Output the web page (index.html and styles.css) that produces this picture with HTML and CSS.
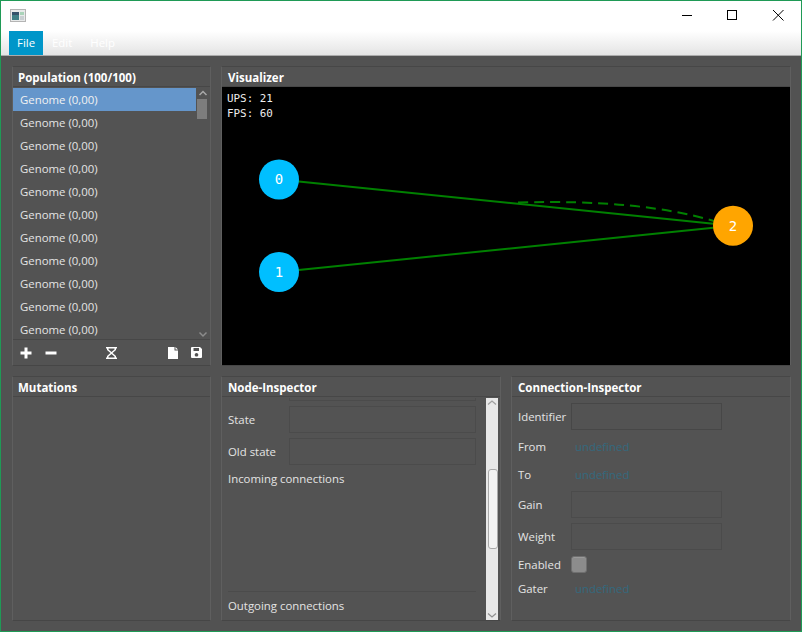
FILE: index.html
```html
<!DOCTYPE html>
<html lang="en">
<head>
<meta charset="utf-8">
<title>Population</title>
<link rel="stylesheet" href="styles.css">
</head>
<body>
<div class="window">
  <header class="titlebar">
    <svg class="appicon" width="16" height="13" viewBox="0 0 16 13">
      <rect x="0.5" y="0.5" width="15" height="12" fill="#e8eaea" stroke="#b4b4b4"/>
      <rect x="2" y="3" width="7" height="8" fill="#3f7f86"/>
      <rect x="2" y="3" width="7" height="3" fill="#35536b"/>
      <rect x="10" y="3" width="4" height="3" fill="#a9d3b9"/>
      <rect x="10" y="7" width="4" height="4" fill="#c9cfd2"/>
    </svg>
    <div class="winbtns">
      <svg class="winbtn" width="46" height="30" viewBox="0 0 46 30"><path d="M19 14.500H29" stroke="#000" fill="none"/></svg>
      <svg class="winbtn" width="46" height="30" viewBox="0 0 46 30"><rect x="18.500" y="9.500" width="9" height="9" stroke="#000" fill="none"/></svg>
      <svg class="winbtn" width="46" height="30" viewBox="0 0 46 30"><path d="M18 9L28.500 19.500M28.500 9L18 19.500" stroke="#000" fill="none"/></svg>
    </div>
  </header>
  <nav class="menubar">
    <span class="menu active">File</span>
    <span class="menu">Edit</span>
    <span class="menu">Help</span>
  </nav>
  <main class="content">
    <section class="panel population">
      <h2 class="ptitle">Population (100/100)</h2>
      <div class="listwrap">
        <ul class="list">
          <li class="row selected">Genome (0,00)</li>
          <li class="row">Genome (0,00)</li>
          <li class="row">Genome (0,00)</li>
          <li class="row">Genome (0,00)</li>
          <li class="row">Genome (0,00)</li>
          <li class="row">Genome (0,00)</li>
          <li class="row">Genome (0,00)</li>
          <li class="row">Genome (0,00)</li>
          <li class="row">Genome (0,00)</li>
          <li class="row">Genome (0,00)</li>
          <li class="row">Genome (0,00)</li>
        </ul>
        <div class="lscroll">
          <svg class="arrow" width="14" height="10" viewBox="0 0 14 10"><path d="M3.500 7L7 3.500L10.500 7" fill="none" stroke="#a8a8a8" stroke-width="1.500"/></svg>
          <div class="lthumb"></div>
          <svg class="arrow bottom" width="14" height="10" viewBox="0 0 14 10"><path d="M3.500 3.500L7 7L10.500 3.500" fill="none" stroke="#8c8c8c" stroke-width="1.500"/></svg>
        </div>
      </div>
      <div class="toolbar">
        <svg width="12" height="12" viewBox="0 0 12 12" class="tool plus"><path d="M0.500 6H11.500M6 0.500V11.500" stroke="#fff" stroke-width="3" fill="none"/></svg>
        <svg width="12" height="12" viewBox="0 0 12 12" class="tool minus"><path d="M0.500 6H11.500" stroke="#fff" stroke-width="3" fill="none"/></svg>
        <svg width="11" height="12" viewBox="0 0 11 12" class="tool glass"><path d="M0 0H11V1.500H10V3L6.500 6L10 9V10.500H11V12H0V10.500H1V9L4.500 6L1 3V1.500H0Z M2.500 1.500V2.500L5.500 5L8.500 2.500V1.500Z M5.500 7L2.500 9.500V10.500H8.500V9.500Z" fill="#fff" fill-rule="evenodd"/></svg>
        <svg width="10" height="12" viewBox="0 0 10 12" class="tool file"><path d="M0 0H6.500V3.500H10V12H0Z M7.500 0L10 2.500H7.500Z" fill="#fff"/></svg>
        <svg width="11" height="11" viewBox="0 0 11 11" class="tool save"><path d="M1 0H9L11 2V10Q11 11 10 11H1Q0 11 0 10V1Q0 0 1 0Z M2.500 1V4H8V1Z M5.500 6A1.800 1.800 0 1 0 5.501 6Z" fill="#fff" fill-rule="evenodd"/></svg>
      </div>
    </section>

    <section class="panel visualizer">
      <h2 class="ptitle">Visualizer</h2>
      <div class="canvas">
        <svg class="graph" width="568" height="278" viewBox="222 87 568 278">
          <line x1="279" y1="179.500" x2="733" y2="225.700" stroke="#008000" stroke-width="2"/>
          <line x1="279" y1="272" x2="733" y2="225.700" stroke="#008000" stroke-width="2"/>
          <path d="M518 202.500Q640 199 714 221" fill="none" stroke="#008000" stroke-width="2" stroke-dasharray="10 6"/>
          <circle cx="279" cy="179.500" r="20" fill="#00bfff"/>
          <circle cx="279" cy="272" r="20" fill="#00bfff"/>
          <circle cx="733" cy="225.700" r="20" fill="#ffa500"/>
          <text class="nodelabel" x="279" y="183.500">0</text>
          <text class="nodelabel" x="279" y="276.500">1</text>
          <text class="nodelabel" x="733" y="230.500">2</text>
          <text class="stat" x="227" y="102">UPS: 21</text>
          <text class="stat" x="227" y="117">FPS: 60</text>
        </svg>
      </div>
    </section>

    <section class="panel mutations">
      <h2 class="ptitle">Mutations</h2>
    </section>

    <section class="panel node">
      <h2 class="ptitle">Node-Inspector</h2>
      <div class="nodebody">
        <div class="nodeform">
          <div class="clipfield"></div>
          <div class="frow">
            <span class="flabel nodelab">State</span>
            <div class="field nodefield"></div>
          </div>
          <div class="frow">
            <span class="flabel nodelab">Old state</span>
            <div class="field nodefield"></div>
          </div>
          <div class="flabel incoming">Incoming connections</div>
          <div class="flabel outgoing">Outgoing connections</div>
        </div>
        <div class="vscroll">
          <svg class="arrow" width="14" height="10" viewBox="0 0 14 10"><path d="M3 6.500L7 3L11 6.500" fill="none" stroke="#a0a0a0" stroke-width="1.300"/></svg>
          <div class="vthumb"></div>
          <svg class="arrow bottom" width="14" height="10" viewBox="0 0 14 10"><path d="M3 3.500L7 7L11 3.500" fill="none" stroke="#909090" stroke-width="1.300"/></svg>
        </div>
      </div>
    </section>

    <section class="panel conn">
      <h2 class="ptitle">Connection-Inspector</h2>
      <div class="connbody">
        <div class="crow r-ident"><span class="flabel clab">Identifier</span><div class="field cfield focus"></div></div>
        <div class="crow r-from"><span class="flabel clab">From</span><span class="link">undefined</span></div>
        <div class="crow r-to"><span class="flabel clab">To</span><span class="link">undefined</span></div>
        <div class="crow r-gain"><span class="flabel clab">Gain</span><div class="field cfield"></div></div>
        <div class="crow r-weight"><span class="flabel clab">Weight</span><div class="field cfield"></div></div>
        <div class="crow r-enabled"><span class="flabel clab">Enabled</span><div class="check"></div></div>
        <div class="crow r-gater"><span class="flabel clab">Gater</span><span class="link">undefined</span></div>
      </div>
    </section>
  </main>
</div>
</body>
</html>
```
FILE: styles.css
```css
* { box-sizing: border-box; }
html, body { margin: 0; padding: 0; }
body { width: 802px; height: 632px; overflow: hidden; font-family: "Open Sans", "Noto Sans", sans-serif; font-size: 11.4px; color: #e6e6e6; }
.window { width: 802px; height: 632px; border: 1px solid #1f9a56; background: #525252; display: flex; flex-direction: column; }
.titlebar { height: 30px; flex: none; background: #fff; display: flex; align-items: center; justify-content: space-between; padding-left: 9px; }
.appicon { margin-top: -1px; }
.winbtns { display: flex; }
.winbtn { display: block; }
.menubar { height: 25px; flex: none; display: flex; padding-left: 8px; background: linear-gradient(#ffffff, #e4e4e4); border-bottom: 1px solid #ababab; }
.menu { padding: 0 9px; line-height: 24px; color: #fff; height: 24px; }
.menu.active { background: #0096c9; width: 34px; padding: 0 8px; }
.content { flex: 1; display: grid; grid-template-columns: 199px 280px 280px; grid-template-rows: 300px 245px; column-gap: 10px; row-gap: 10px; padding: 10px 0 0 11px; align-content: start; }
.panel { border: 1px solid #5f5f5f; border-top-color: #474747; border-bottom-color: #464646; background: #535353; display: flex; flex-direction: column; min-width: 0; min-height: 0; overflow: hidden; }
.ptitle { margin: 0; height: 20px; flex: none; padding-left: 6px; font-size: 11.5px; line-height: 21px; font-weight: 700; color: #fff; border-bottom: 1px solid #474747; }
.population .ptitle, .mutations .ptitle { padding-left: 5px; }
.population { grid-column: 1; grid-row: 1; }
.visualizer { grid-column: 2 / 4; grid-row: 1; }
.mutations { grid-column: 1; grid-row: 2; }
.node { grid-column: 2; grid-row: 2; }
.conn { grid-column: 3; grid-row: 2; }
.listwrap { flex: 1; display: flex; min-height: 0; overflow: hidden; margin-top: 1px; }
.list { list-style: none; margin: 0; padding: 0; width: 183px; flex: none; overflow: hidden; }
.row { height: 23px; line-height: 23px; padding-left: 7px; color: #e4e4e4; }
.row.selected { background: #6596cb; color: #f2f2f2; }
.lscroll { flex: 1; display: flex; flex-direction: column; }
.arrow { display: block; flex: none; }
.arrow.bottom { margin-top: auto; }
.lthumb { width: 10px; height: 20px; margin: 1px 0 0 1px; background: #7d7d7d; flex: none; }
.toolbar { height: 26px; flex: none; border-top: 1px solid #474747; display: flex; align-items: center; padding-left: 7px; }
.tool { display: block; flex: none; }
.minus { margin-left: 13px; }
.glass { margin-left: 49px; }
.file { margin-left: 51px; }
.save { margin-left: 13px; }
.canvas { flex: 1; background: #000; min-height: 0; }
.graph { display: block; }
.nodelabel { font-family: "DejaVu Sans Mono", monospace; font-size: 14px; fill: #fff; text-anchor: middle; }
.stat { font-family: "DejaVu Sans Mono", monospace; font-size: 10.9px; fill: #eee; }
.nodebody { flex: 1; display: flex; min-height: 0; margin-top: 1px; }
.nodeform { flex: 1; min-width: 0; padding: 0 5px 0 6px; display: flex; flex-direction: column; }
.clipfield { height: 3px; margin: 0 5px 0 61px; border: 1px solid #4b4b4b; border-top: 0; flex: none; }
.frow { display: flex; align-items: center; height: 27px; margin-top: 5px; flex: none; }
.flabel { color: #e4e4e4; white-space: nowrap; }
.nodelab { width: 61px; flex: none; }
.field { border: 1px solid #4b4b4b; height: 27px; }
.nodefield { width: 187px; }
.incoming { margin-top: 5px; line-height: 17px; flex: none; }
.outgoing { margin-top: auto; border-top: 1px solid #4b4b4b; height: 29px; padding-top: 5px; margin-right: 5px; line-height: 17px; flex: none; }
.vscroll { width: 12px; flex: none; margin-right: 2px; background: #e8e8e8; display: flex; flex-direction: column; }
.vscroll .arrow { margin-left: -1px; }
.vthumb { width: 10px; height: 80px; margin: 61px 0 0 2px; background: #f2f2f2; border: 1px solid #a9a9a9; border-radius: 3px; flex: none; }
.connbody { flex: 1; padding: 1px 6px 0; display: flex; flex-direction: column; }
.crow { display: flex; align-items: center; flex: none; }
.clab { width: 53px; flex: none; }
.cfield { width: 151px; }
.cfield.focus { border-color: #474747; }
.link { color: #33697e; padding-left: 4px; }
.r-ident { margin-top: 5px; height: 27px; }
.r-from { margin-top: 4px; height: 24px; }
.r-to { margin-top: 4px; height: 24px; }
.r-gain { margin-top: 5px; height: 27px; }
.r-weight { margin-top: 5px; height: 27px; }
.r-enabled { margin-top: 2px; height: 24px; }
.r-gater { margin-top: 0; height: 24px; }
.check { width: 16px; height: 17px; border-radius: 3px; background: #8c8c8c; border: 1px solid #6f6f6f; box-shadow: inset 0 1px 0 #9a9a9a; }
```
